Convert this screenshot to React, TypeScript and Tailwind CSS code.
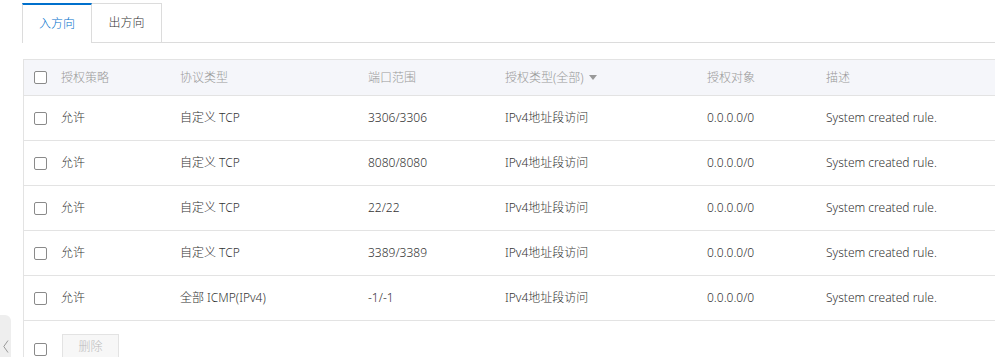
import React from "react";

const rows = [
  { policy: "允许", proto: "自定义 TCP", port: "3306/3306" },
  { policy: "允许", proto: "自定义 TCP", port: "8080/8080" },
  { policy: "允许", proto: "自定义 TCP", port: "22/22" },
  { policy: "允许", proto: "自定义 TCP", port: "3389/3389" },
  { policy: "允许", proto: "全部 ICMP(IPv4)", port: "-1/-1" },
];

function Box() {
  return <span className="block w-[13px] h-[13px] border border-[#8a8a8a] rounded-[2px] bg-white" />;
}

export default function App() {
  return (
    <div
      className="relative w-[995px] h-[357px] overflow-hidden bg-white text-[12px] text-[#333] font-light"
      style={{ fontFamily: '"Noto Sans", "Noto Sans CJK SC", sans-serif' }}
    >
      {/* tabs */}
      <div className="flex mt-[3px] ml-[22px] h-[40px] border-b border-[#dcdcdc]">
        <div className="w-[70px] h-[40px] border-t-2 border-t-[#0070cc] border-l border-r border-[#dcdcdc] bg-white flex items-center justify-center text-[#0070cc]">
          入方向
        </div>
        <div className="w-[70px] h-[39px] border-t border-r border-[#dcdcdc] flex items-center justify-center text-[#333]">
          出方向
        </div>
      </div>

      {/* table */}
      <div className="ml-[23px] mt-[16px] border-l border-[#e3e3e3]">
        <div className="flex items-center h-[37px] bg-[#f5f6fa] border-t border-b border-[#e3e3e3] text-[#999]">
          <div className="w-[37px] pl-[10px]"><Box /></div>
          <div className="w-[119px]">授权策略</div>
          <div className="w-[188px]">协议类型</div>
          <div className="w-[137px]">端口范围</div>
          <div className="w-[202px] flex items-center">
            授权类型(全部)
            <svg width="8" height="5" viewBox="0 0 8 5" className="ml-[5px]"><path d="M0 0 L8 0 L4 5 Z" fill="#999" /></svg>
          </div>
          <div className="w-[119px]">授权对象</div>
          <div>描述</div>
        </div>
        {rows.map((r, i) => (
          <div key={i} className="flex items-center h-[45px] border-b border-[#e3e3e3]">
            <div className="w-[37px] pl-[10px]"><Box /></div>
            <div className="w-[119px]">{r.policy}</div>
            <div className="w-[188px]">{r.proto}</div>
            <div className="w-[137px]">{r.port}</div>
            <div className="w-[202px]">IPv4地址段访问</div>
            <div className="w-[119px]">0.0.0.0/0</div>
            <div>System created rule.</div>
          </div>
        ))}
        <div className="flex items-start pt-[13px] h-[40px]">
          <div className="w-[38px] pl-[10px] pt-[9px]"><Box /></div>
          <div className="w-[57px] h-[26px] border border-[#e3e3e3] bg-[#f7f7f7] text-[#bbb] flex items-center justify-center">
            删除
          </div>
        </div>
      </div>

      {/* side collapse tab */}
      <div className="absolute left-0 top-[315px] w-[11px] h-[42px] bg-[#eeeeee] rounded-tr-[6px] flex items-end justify-center pb-[4px]">
        <svg width="6" height="13" viewBox="0 0 6 13"><path d="M5 0.5 L0.8 6.5 L5 12.5" stroke="#999" strokeWidth="1" fill="none" /></svg>
      </div>
    </div>
  );
}
